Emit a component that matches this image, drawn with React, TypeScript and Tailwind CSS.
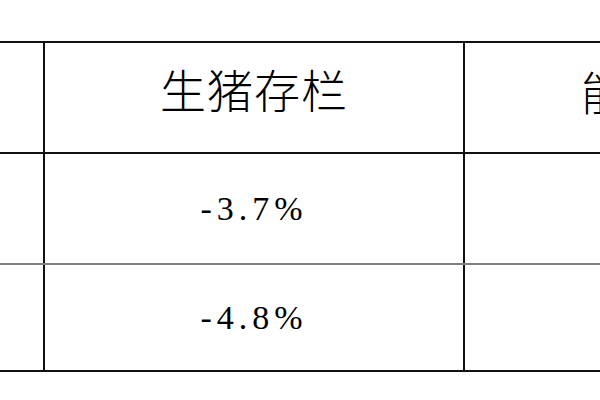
const rows = [
  { value: "-3.7%", height: "h-[111px]", line: "border-b-2 border-[#7f7f7f]" },
  { value: "-4.8%", height: "h-[107px]", line: "border-b-2 border-[#111]" },
];

export default function App() {
  return (
    <div className="w-[600px] h-[400px] bg-white overflow-hidden">
      <div className="mt-[41px] border-t-2 border-[#111]">
        {/* header */}
        <div className="flex h-[111px] border-b-2 border-[#111]">
          <div className="w-[45px] shrink-0 border-r-2 border-[#111]" />
          <div className="w-[420px] shrink-0 border-r-2 border-[#111] flex items-center justify-center pb-[20px]">
            <span
              className="text-[46px] leading-none font-light text-black tracking-[1px]"
              style={{ fontFamily: '"Noto Sans CJK SC", sans-serif' }}
            >
              生猪存栏
            </span>
          </div>
          <div className="flex-1 flex items-center pl-[116px] pb-[16px] whitespace-nowrap overflow-hidden">
            <span
              className="text-[46px] leading-none font-light text-black"
              style={{ fontFamily: '"Noto Sans CJK SC", sans-serif' }}
            >
              能繁
            </span>
          </div>
        </div>

        {rows.map((row) => (
          <div key={row.value} className={`flex ${row.height} ${row.line}`}>
            <div className="w-[45px] shrink-0 border-r-2 border-[#111]" />
            <div className="w-[420px] shrink-0 border-r-2 border-[#111] flex items-center justify-center">
              <span
                className="text-[34px] leading-none text-black tracking-[5px]"
                style={{ fontFamily: '"Liberation Serif", "Times New Roman", serif' }}
              >
                {row.value}
              </span>
            </div>
            <div className="flex-1" />
          </div>
        ))}
      </div>
    </div>
  );
}
